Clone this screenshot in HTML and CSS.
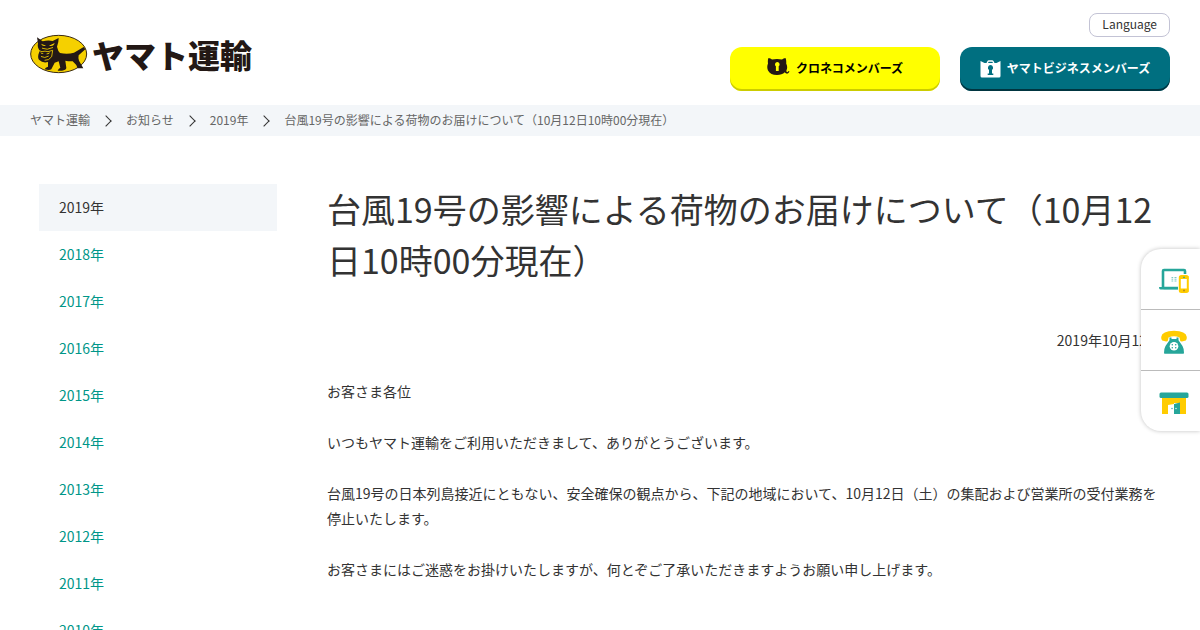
FILE: index.html
```html
<!DOCTYPE html>
<html lang="ja">
<head>
<meta charset="utf-8">
<meta name="viewport" content="width=device-width, initial-scale=1">
<title>台風19号の影響による荷物のお届けについて | ヤマト運輸</title>
<link rel="stylesheet" href="styles.css">
</head>
<body>
<header class="header">
  <a class="logo" href="#">
    <svg class="logo-mark" viewBox="0 0 174 120" aria-hidden="true">
      <ellipse cx="86" cy="60" rx="84" ry="56" fill="#f5d000" stroke="#3a2a12" stroke-width="3"/>
      <path fill="#231815" d="M21 10L38 22Q54 18 68 21L86 12Q86 26 81 38Q84 52 90 57Q112 62 132 56L161 39L166 46L146 64Q144 72 147 80L160 103H143Q140 92 128 82Q112 82 106 80L109 102Q108 108 96 110H83Q85 104 91 101L86 82L74 86L64 106Q58 110 44 106Q46 100 54 98L54 84Q38 88 28 78Q23 74 25 62L29 50Q21 40 24 28Z"/>
      <path fill="#f5d000" d="M33 29l15 6q-10 4-15-6zM57 35l17-8q-3 11-17 8zM31 55l10 4q-7 3-10-4zM48 60l12-5q-3 8-12 5z"/>
      <path fill="none" stroke="#f5d000" stroke-width="2.500" stroke-linecap="round" d="M37 43q14 7 31-2M27 50l9 3q9-3 18 0l14-4-3 19q-8 12-20 11M34 68q10 6 21-1"/>
    </svg>
    <span class="logo-text">ヤマト運輸</span>
  </a>
  <div class="header-tools">
    <button class="language" type="button">Language</button>
    <div class="members">
      <a class="member member-personal" href="#">
        <svg width="23" height="18" viewBox="0 0 23 18" aria-hidden="true">
          <path fill="#231815" d="M1.500 0q2 .2 3.500 1.400Q10 .4 15 1.400 16.500.2 18.500 0q1 2 .7 5.500Q21 9 19.500 12.300q-.4 1.200.6 1.800.8.200 1.400-1l1 .5q-1 2.400-3 2-1.300-.4-1.700-1.300Q15 17 10 17 3.500 17 1 12.500-.5 9 1 5.500.5 2 1.500 0z"/>
          <path fill="#ff0" d="M10.300 4a2.400 2.400 0 0 1 1.400 4.300V13H8.900V8.300A2.400 2.400 0 0 1 10.300 4z"/>
        </svg>
        <span>クロネコメンバーズ</span>
      </a>
      <a class="member member-business" href="#">
        <svg class="case-icon" width="21" height="18" viewBox="0 0 21 18" aria-hidden="true">
          <path fill="#fff" d="M.5 1l4 2h2l1-2q.4-.8 1.300-.8h3.400q.9 0 1.300.8l1 2h2l4-2V16q0 1.500-1.500 1.500H2Q.5 17.500.5 16zM8 3h5l-.7-1.300H8.700z"/>
          <path fill="#006f80" d="M10.500 5a2.800 2.800 0 0 1 1.500 5v3.500h1.300V15H7.700v-1.500H9V10a2.800 2.800 0 0 1 1.500-5z"/>
        </svg>
        <span>ヤマトビジネスメンバーズ</span>
      </a>
    </div>
  </div>
</header>

<nav class="breadcrumb" aria-label="パンくずリスト">
  <ol class="breadcrumb-list">
    <li><a href="#">ヤマト運輸</a></li>
    <li><a href="#">お知らせ</a></li>
    <li><a href="#">2019年</a></li>
    <li>台風19号の影響による荷物のお届けについて（10月12日10時00分現在）</li>
  </ol>
</nav>

<div class="page">
  <nav class="years" aria-label="年別">
    <a class="year year-current" href="#">2019年</a>
    <a class="year" href="#">2018年</a>
    <a class="year" href="#">2017年</a>
    <a class="year" href="#">2016年</a>
    <a class="year" href="#">2015年</a>
    <a class="year" href="#">2014年</a>
    <a class="year" href="#">2013年</a>
    <a class="year" href="#">2012年</a>
    <a class="year" href="#">2011年</a>
    <a class="year" href="#">2010年</a>
  </nav>
  <main class="article">
    <h1 class="title">台風19号の影響による荷物のお届けについて（10月12日10時00分現在）</h1>
    <p class="date">2019年10月12日</p>
    <p>お客さま各位</p>
    <p>いつもヤマト運輸をご利用いただきまして、ありがとうございます。</p>
    <p>台風19号の日本列島接近にともない、安全確保の観点から、下記の地域において、10月12日（土）の集配および営業所の受付業務を停止いたします。</p>
    <p>お客さまにはご迷惑をお掛けいたしますが、何とぞご了承いただきますようお願い申し上げます。</p>
  </main>
</div>

<aside class="contact">
  <a class="contact-item" href="#" aria-label="オンライン">
    <svg width="30" height="26" viewBox="0 0 30 26" aria-hidden="true">
      <rect x="4" y="2" width="22" height="18" rx="1" fill="#fff" stroke="#26a69a" stroke-width="2.600"/>
      <path d="M0 19h20v2.500H1.500Q0 21.500 0 19z" fill="#26a69a"/>
      <path d="M12.500 9.500h1.700M15.500 9.500h2M12.500 11.200h1.700M15.500 11.200h2M12.500 13h1.700M15.500 13h2" stroke="#7cc9c1" stroke-width="1"/>
      <rect x="19" y="6" width="11" height="19" fill="#fff"/>
      <rect x="20.800" y="8" width="8" height="16" rx="1.500" fill="#fff" stroke="#fc0" stroke-width="2"/>
      <path d="M20 8h9.500v3H20zM20 20.500h9.500V24H20z" fill="#fc0"/>
      <path d="M24 9.300h2" stroke="#26a69a"/><circle cx="25" cy="22.500" r="1" fill="#b58a20"/>
    </svg>
  </a>
  <a class="contact-item" href="#" aria-label="電話">
    <svg width="26" height="24" viewBox="0 0 26 24" aria-hidden="true">
      <path d="M1.200 10.500Q0 9.500.2 7 1 1 13 .8 25 1 25.800 7 26 9.500 24.800 10.500L21 11.500q-1.600.2-2-1.200L18.500 7.500Q13 5 7.500 7.500L7 10.300q-.4 1.400-2 1.200z" fill="#fc0"/>
      <path d="M8.500 7.500h2V9h5V7.500h2v2.800l4 5.700Q23 18.500 23 23q0 .7-.8.700H3.800Q3 23.700 3 23q0-4.500 1.500-7l4-5.700z" fill="#26a69a"/>
      <circle cx="13" cy="16.200" r="4.300" fill="#fff"/>
      <g fill="#26a69a"><circle cx="11.300" cy="14.800" r=".8"/><circle cx="14.700" cy="14.800" r=".8"/><circle cx="11.300" cy="17.800" r=".8"/><circle cx="14.700" cy="17.800" r=".8"/></g>
    </svg>
  </a>
  <a class="contact-item" href="#" aria-label="営業所">
    <svg width="30" height="22" viewBox="0 0 30 22" aria-hidden="true">
      <path d="M3 5h24v17h-6V11H9v11H3z" fill="#fc0"/>
      <rect x=".5" y=".500" width="29" height="5.500" rx="1.500" fill="#26a69a"/>
      <path d="M15 12l6-1.500V22h-6z" fill="#26a69a"/>
      <path d="M9 10.500h6V12l-6 1z" fill="#fc0"/>
      <circle cx="17" cy="16.500" r=".7" fill="#fff"/><circle cx="13" cy="16.500" r=".7" fill="#26a69a"/>
    </svg>
  </a>
</aside>
</body>
</html>
```
FILE: styles.css
```css
* {
  box-sizing: border-box;
}

body {
  margin: 0;
  background: #fff;
  color: #333;
  font-family: "Noto Sans CJK JP", sans-serif;
  font-size: 14px;
  line-height: 25px;
}

a {
  color: inherit;
  text-decoration: none;
}

.header {
  display: flex;
  align-items: center;
  justify-content: space-between;
  padding: 13px 30px 14px;
}

.logo {
  display: flex;
  align-items: center;
  gap: 4px;
  padding-top: 4px;
  color: #231815;
}

.logo-mark {
  width: 58px;
  height: 40px;
}

.logo-text {
  font-size: 32px;
  font-weight: 900;
  line-height: 40px;
}

.header-tools {
  display: flex;
  flex-direction: column;
  align-items: flex-end;
  gap: 10px;
}

.language {
  height: 24px;
  padding: 0 12px 2px;
  border: 1px solid #c3c3d5;
  border-radius: 8px;
  background: #fff;
  color: #333;
  font-family: inherit;
  font-size: 12px;
  line-height: 20px;
}

.members {
  display: flex;
  gap: 20px;
}

.member {
  display: flex;
  align-items: center;
  justify-content: center;
  gap: 6px;
  width: 210px;
  height: 44px;
  padding-bottom: 4px;
  border-radius: 12px;
  font-size: 12px;
  font-weight: 700;
}

.case-icon {
  margin-top: 4px;
}

.member-personal {
  background: #ff0;
  box-shadow: inset 0 -2px 0 #cc0;
  color: #000;
}

.member-business {
  background: #006f80;
  box-shadow: inset 0 -2px 0 #003540;
  color: #fff;
}

.breadcrumb {
  padding: 0 30px 2px;
  background: #f3f6f9;
  color: #666;
  font-size: 12px;
  line-height: 29px;
}

.breadcrumb-list {
  display: flex;
  margin: 0;
  padding: 0;
  list-style: none;
}

.breadcrumb-list li {
  display: flex;
  align-items: center;
}

.breadcrumb-list li + li::before {
  content: "";
  width: 7px;
  height: 7px;
  margin: 2px 16px 0 12px;
  border-top: 1px solid #333;
  border-right: 1px solid #333;
  transform: rotate(45deg);
}

.page {
  display: grid;
  grid-template-columns: 238px 1fr;
  gap: 50px;
  padding: 48px 39px;
}

.year {
  display: block;
  padding: 11px 20px;
  color: #009688;
}

.year-current {
  background: #f3f6f9;
  color: #333;
}

.title {
  margin: -1px 0 43px;
  font-size: 34px;
  font-weight: 400;
  line-height: 51px;
}

.article p {
  margin: 0 0 26px;
}

.article .date {
  text-align: right;
}

.contact {
  position: fixed;
  top: 249px;
  right: 0;
  width: 59px;
  overflow: hidden;
  border-radius: 20px 0 0 20px;
  background: #fff;
  box-shadow: 0 0 4px rgba(0, 0, 0, 0.25);
}

.contact-item {
  display: flex;
  align-items: center;
  justify-content: center;
  height: 60px;
  padding: 4px 0 0 7px;
}

.contact-item + .contact-item {
  height: 61px;
  border-top: 1px solid #bbb;
}
```
